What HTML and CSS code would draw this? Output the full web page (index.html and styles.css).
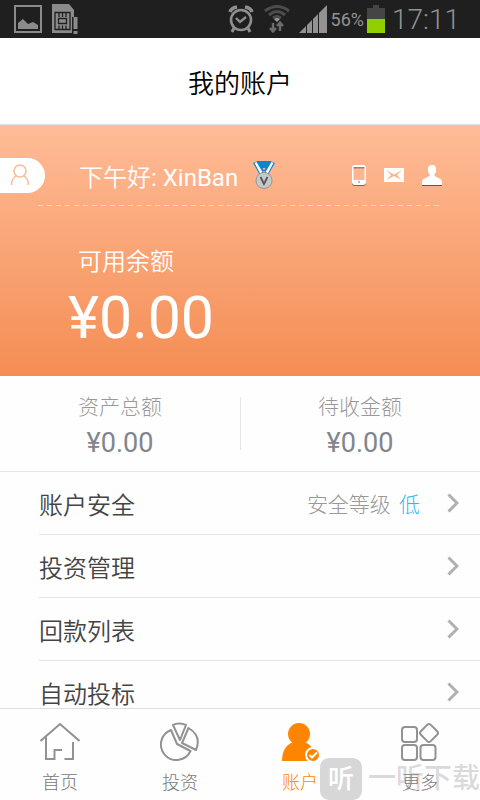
FILE: index.html
```html
<!DOCTYPE html>
<html lang="zh-CN">
<head>
<meta charset="utf-8">
<meta name="viewport" content="width=device-width, initial-scale=1">
<title>我的账户</title>
<link rel="stylesheet" href="styles.css">
</head>
<body>
<div class="app">
  <div class="status">
    <div class="status-side">
      <svg width="28" height="30" viewBox="0 0 28 30"><path d="M1 2h26v26H1z" fill="none" stroke="#8b8b8b" stroke-width="2"/><path d="M4 25v-6l5-4 5 5 5-2 5 3v4z" fill="#8b8b8b"/></svg>
      <svg width="28" height="30" viewBox="0 0 28 30"><path d="M1 0h17l5 6v23H1z" fill="#8b8b8b"/><path d="M4 8.500h15v17H4zM7.500 14.500h8v5h-8zM8 9v4M11.500 9v4M15 9v4M8 21.500v4M11.500 21.500v4M15 21.500v4" fill="none" stroke="#202020" stroke-width="1.300"/><path d="M21 13h6v17h-6z" fill="#1f1f1f"/><path d="M22.500 13h4v12h-4zM22.500 27h4v3h-4z" fill="#8b8b8b"/></svg>
    </div>
    <div class="status-side status-right">
      <svg width="26" height="28" viewBox="0 0 26 28" fill="none" stroke="#8f8f8f"><circle cx="13" cy="15" r="10" stroke-width="2.600"/><path d="M8 13l4 4 6-5" stroke-width="2.400"/><path d="M2 7q1-4 7-5M24 7q-1-4-7-5" stroke-width="3.500"/><path d="M6 23l-2 4M20 23l2 4" stroke-width="3"/></svg>
      <svg class="wifi" width="26" height="28" viewBox="0 0 26 28"><g fill="none" stroke="#4c4c4c" stroke-width="3"><path d="M1 6Q13-3 25 6M5 10Q13 3 21 10M9 13Q13 10 17 13"/></g><path d="M10 14q3-2 6 0l-3 3z" fill="#999"/><path d="M9 18v8M6 23l3 3.500 3-3.500M16 26v-8M13 21l3-3.500 3 3.500" fill="none" stroke="#6c6c6c" stroke-width="2.400"/></svg>
      <svg width="29" height="28" viewBox="0 0 29 28" fill="#929292"><path d="M0 28l7-7v7zM8 20l5-5v13H8zM14 14l5-5v19h-5zM20 8l8-8v28h-8z"/></svg>
      <span class="percent">56%</span>
      <svg width="18" height="28" viewBox="0 0 18 28"><path d="M6 0h6v3h6v11H0V3h6z" fill="#454545"/><path d="M0 14h18v14H0z" fill="#91d000"/></svg>
      <span class="clock">17:11</span>
    </div>
  </div>

  <header class="header"><h1>我的账户</h1></header>

  <section class="hero">
    <div class="greeting">
      <button class="profile" aria-label="个人资料">
        <svg width="20" height="22" viewBox="0 0 20 22" fill="none" stroke="#fbbd98" stroke-width="1.600"><circle cx="10" cy="7" r="6"/><path d="M1.500 21c0-4 2-8 5-9M18.500 21c0-4-2-8-5-9"/></svg>
      </button>
      <span class="hello">下午好<span class="name">: XinBan</span></span>
      <svg class="medal" width="22" height="28" viewBox="0 0 22 28"><path d="M4 0h14l-4 7H8z" fill="#0a87d0"/><path d="M0 2l5-2 7 11-5 3zM22 2l-5-2-7 11 5 3z" fill="#0a87d0"/><path d="M1.500 2l2-1 6 10-2 2zM20.500 2l-2-1-6 10 2 2z" fill="#fff"/><circle cx="11" cy="19.500" r="8" fill="#c6c8c9" stroke="#929699"/><path d="M7.500 16l3.500 7 3.500-7" fill="none" stroke="#555" stroke-width="1.800"/></svg>
      <div class="actions">
        <button aria-label="手机"><svg width="14" height="21" viewBox="0 0 14 21"><rect y="1" width="14" height="20" rx="3" fill="#77645e"/><rect width="14" height="20" rx="3" fill="#fff"/><path d="M1.500 3h11v12h-11z" fill="#fdb68f"/><path d="M1.500 2h11v1.500h-11z" fill="#8d8582"/><path d="M6 17h2" stroke="#777"/></svg></button>
        <button aria-label="消息"><svg width="20" height="14" viewBox="0 0 20 14"><path d="M0 0h20v14H0z" fill="#fff"/><path d="M2 2L10 6.500 18 2l-5 5 4.500 5-7.500-4-7.500 4L7 7z" fill="#fcb68f"/></svg></button>
        <button aria-label="账户"><svg width="20" height="21" viewBox="0 0 20 21"><path d="M10 0c3 0 4.500 2 4 5 .500 2-.500 3-1.500 4v2l6 3q1.500 1 1.500 3v3H0v-3q0-2 1.500-3l6-3V9C6.500 8 5.500 7 6 5c-.500-3 1-5 4-5z" fill="#fff"/><path d="M0 20.500h20" stroke="#5a5560"/></svg></button>
      </div>
    </div>
    <svg class="dashes" height="1" aria-hidden="true"><line x1="0" y1="0.500" x2="100%" y2="0.500" stroke="#f3d5c4" stroke-width="1" stroke-dasharray="5 4"/></svg>
    <div class="balance">
      <p class="balance-label">可用余额</p>
      <p class="balance-value">¥0.00</p>
    </div>
  </section>

  <section class="stats">
    <div class="stat"><span class="stat-label">资产总额</span><span class="stat-value">¥0.00</span></div>
    <div class="stat"><span class="stat-label">待收金额</span><span class="stat-value">¥0.00</span></div>
  </section>

  <nav class="menu">
    <a class="row" href="#security"><span>账户安全</span><span class="level">安全等级 <b>低</b></span><svg width="12" height="20" viewBox="0 0 12 20"><path d="M1.500 1.500L10 10l-8.500 8.500"/></svg></a>
    <a class="row" href="#invest"><span>投资管理</span><svg width="12" height="20" viewBox="0 0 12 20"><path d="M1.500 1.500L10 10l-8.500 8.500"/></svg></a>
    <a class="row" href="#payments"><span>回款列表</span><svg width="12" height="20" viewBox="0 0 12 20"><path d="M1.500 1.500L10 10l-8.500 8.500"/></svg></a>
    <a class="row" href="#auto"><span>自动投标</span><svg width="12" height="20" viewBox="0 0 12 20"><path d="M1.500 1.500L10 10l-8.500 8.500"/></svg></a>
  </nav>

  <nav class="tabs">
    <a class="tab" href="#home"><svg width="40" height="40" viewBox="0 0 40 40"><path d="M.500 19L20 2l19.500 17M6 15v22h8.500v-9H22M33 20v17h-8.500"/></svg>首页</a>
    <a class="tab" href="#investments"><svg width="40" height="40" viewBox="0 0 40 40"><path d="M11 8A15.500 15.500 0 1 0 30.500 29L17 22zM13 3q6-3 13 0l-6 15zM28.500 6Q42 14 36 28L22 21z" stroke-linejoin="round"/></svg>投资</a>
    <a class="tab active" href="#account"><svg width="40" height="40" viewBox="0 0 40 40"><g fill="#ff8500" stroke="none"><circle cx="19" cy="12" r="11"/><path d="M2 39c0-10 4-17 12-19h10c7 2 11 8 12 19z"/></g><circle cx="33" cy="33" r="7" fill="#ff8500" stroke="#fff" stroke-width="2"/><path d="M29.500 33l2.500 2.500 5-5" stroke="#fff"/></svg>账户</a>
    <a class="tab" href="#more"><svg width="40" height="40" viewBox="0 0 40 40"><rect x="2" y="5" width="15" height="15" rx="3"/><rect x="2" y="23" width="15" height="15" rx="3"/><rect x="20.500" y="23" width="15" height="15" rx="3"/><rect x="22" y="4" width="14" height="14" rx="2.500" transform="rotate(45 29 11)"/></svg>更多</a>
  </nav>
  <div class="watermark"><span class="mark">听</span><span>一听下载</span></div>
</div>
</body>
</html>
```
FILE: styles.css
```css
* { box-sizing: border-box; }
body, h1, p { margin: 0; }
body {
  font-family: Roboto, "Noto Sans CJK SC", sans-serif;
  font-weight: 300;
  background: #fefefe;
  color: #444;
}
svg { flex: none; }
a { color: inherit; text-decoration: none; }
button { border: 0; padding: 0; background: none; display: flex; align-items: center; justify-content: center; }
.app { position: relative; display: flex; flex-direction: column; height: 100vh; overflow: hidden; }

.status {
  display: flex; justify-content: space-between; align-items: center;
  flex: none; height: 38px; padding: 0 20px 0 14px;
  background: #1f1f1f; color: #929292;
}
.status-side { display: flex; align-items: center; gap: 9px; }
.status-right { gap: 3px; }
.wifi { margin: 0 6px 0 7px; }
.percent { font-size: 18px; font-weight: 400; }
.clock { font-size: 28px; margin-left: 4px; }

.header {
  display: flex; align-items: center; justify-content: center;
  flex: none; height: 87px; border-bottom: 1px solid #dde3e6; background: #fff;
}
h1 { font-size: 26px; font-weight: 350; color: #000; }

.hero { flex: none; height: 251px; padding-top: 32px; background: linear-gradient(#ffbc97, #f48d54); color: #fff; }
.greeting { display: flex; align-items: center; height: 36px; padding-right: 38px; }
.profile { width: 45px; height: 35px; background: #fff; border-radius: 0 18px 18px 0; padding-right: 5px; }
.hello { margin-left: 34px; font-size: 24px; font-weight: 350; }
.name { font-weight: 400; }
.medal { margin-left: 15px; }
.actions { display: flex; align-items: center; gap: 18px; margin-left: auto; }
.dashes { display: block; width: calc(100% - 76px); margin: 12px 38px 0; }
.balance { padding: 38px 68px 0; }
.balance-label { padding-left: 10px; font-size: 24px; line-height: 36px; font-weight: 350; }
.balance-value { font-size: 59px; line-height: 76px; font-weight: 400; }

.stats { display: flex; flex: none; height: 96px; border-bottom: 1px solid #e5e6e8; background: linear-gradient(#e5e6e8, #e5e6e8) center / 1px 53px no-repeat; }
.stat { display: flex; flex: 1; flex-direction: column; align-items: center; padding-top: 15px; }
.stat-label { font-size: 21px; line-height: 32px; color: #999; }
.stat-value { font-size: 27px; line-height: 40px; font-weight: 400; color: #80858e; }

.menu { flex: 1; min-height: 0; overflow: hidden; padding-left: 39px; }
.row { display: flex; align-items: center; height: 63px; padding-right: 21px; border-bottom: 1px solid #e5e6e8; font-size: 24px; font-weight: 350; }
.row svg { margin-left: auto; fill: none; stroke: #b0b0b0; stroke-width: 3; }
.level { margin-left: auto; font-size: 21px; font-weight: 300; color: #999; }
.level b { margin-left: 3px; font-weight: 300; color: #35b8f2; }
.level + svg { margin-left: 27px; }

.tabs { display: flex; flex: none; height: 92px; border-top: 1px solid #dcdfe1; background: #fefefe; }
.tab { display: flex; flex: 1; flex-direction: column; align-items: center; padding-top: 13px; gap: 7px; font-size: 18px; line-height: 27px; color: #777; }
.tab svg { fill: none; stroke: #929292; stroke-width: 2; }
.tab.active { color: #ff8500; }

.watermark {
  position: absolute; right: 0; bottom: 0; pointer-events: none;
  display: flex; align-items: center; gap: 6px;
  font-size: 28px; line-height: 42px; font-weight: 500; color: rgba(150, 150, 150, .35); white-space: nowrap;
}
.mark { width: 42px; height: 42px; border-radius: 9px; background: rgba(205, 205, 205, .8); color: #fff; text-align: center; font-size: 26px; }
```
